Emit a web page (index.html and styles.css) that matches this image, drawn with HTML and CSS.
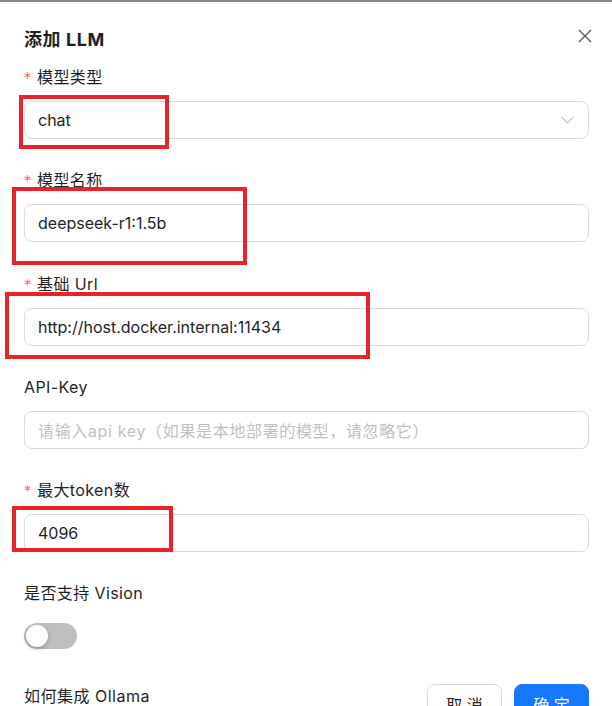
FILE: index.html
```html
<!DOCTYPE html>
<html lang="zh-CN">
<head>
<meta charset="utf-8">
<title>添加 LLM</title>
<link rel="stylesheet" href="styles.css">
</head>
<body>
<div class="topline"></div>
<div class="modal">
  <div class="header">
    <div class="title">添加 LLM</div>
    <button class="close" aria-label="close">
      <svg width="14" height="14" viewBox="0 0 14 14"><path d="M1 1L13 13M13 1L1 13" stroke="#5a5a5a" stroke-width="1.4" fill="none"/></svg>
    </button>
  </div>
  <form class="form">
    <div class="item">
      <div class="label"><span class="req">*</span>模型类型</div>
      <div class="input select"><span>chat</span>
        <svg class="arrow" width="13" height="8" viewBox="0 0 13 8"><path d="M0.5 0.8L6.5 7L12.5 0.8" stroke="#bfbfbf" stroke-width="1.1" fill="none"/></svg>
      </div>
    </div>
    <div class="item">
      <div class="label"><span class="req">*</span>模型名称</div>
      <div class="input">deepseek-r1:1.5b</div>
    </div>
    <div class="item">
      <div class="label"><span class="req">*</span>基础 Url</div>
      <div class="input">http://host.docker.internal:11434</div>
    </div>
    <div class="item">
      <div class="label">API-Key</div>
      <div class="input placeholder">请输入api key（如果是本地部署的模型，请忽略它）</div>
    </div>
    <div class="item">
      <div class="label"><span class="req">*</span>最大token数</div>
      <div class="input">4096</div>
    </div>
    <div class="item">
      <div class="label">是否支持 Vision</div>
      <div class="control"><span class="switch"><span class="knob"></span></span></div>
    </div>
  </form>
  <div class="footer">
    <div class="link">如何集成 Ollama</div>
    <div class="buttons">
      <button class="btn">取 消</button>
      <button class="btn primary">确 定</button>
    </div>
  </div>
</div>
<div class="mark m1"></div>
<div class="mark m2"></div>
<div class="mark m3"></div>
<div class="mark m5"></div>
</body>
</html>
```
FILE: styles.css
```css
html, body {
  margin: 0;
  padding: 0;
  background: #fff;
  overflow: hidden;
}
body {
  font-family: Inter, "Noto Sans CJK SC", sans-serif;
  color: rgba(0, 0, 0, 0.88);
  font-size: 16px;
  position: relative;
  height: 706px;
}
.topline {
  height: 2px;
  background: #8a8a8a;
}
.modal {
  padding: 0 23px 0 24px;
}
.header {
  display: flex;
  justify-content: space-between;
  align-items: flex-start;
  margin-top: 26px;
  margin-bottom: 13px;
}
.title {
  font-size: 18px;
  font-weight: 700;
  line-height: 24px;
  color: #1f1f1f;
  letter-spacing: 0.6px;
}
.close {
  border: 0;
  background: none;
  padding: 0;
  margin: 1px -3px 0 0;
  width: 14px;
  height: 14px;
  display: flex;
}
.form {
  display: flex;
  flex-direction: column;
}
.item {
  display: flex;
  flex-direction: column;
  margin-bottom: 29.3px;
}
.label {
  line-height: 24px;
  height: 24px;
  margin-bottom: 12px;
  color: #1f1f1f;
  letter-spacing: 0.4px;
}
.req {
  display: inline-block;
  width: 13px;
  color: #ff4d4f;
  font-size: 14px;
  font-family: "DejaVu Sans", sans-serif;
  vertical-align: top;
  line-height: 24px;
  letter-spacing: 0;
}
.input {
  height: 38px;
  box-sizing: border-box;
  border: 1px solid #d9d9d9;
  border-radius: 8px;
  padding: 0 13px;
  display: flex;
  align-items: center;
  color: #1f1f1f;
  white-space: nowrap;
}
.select {
  justify-content: space-between;
}
.arrow {
  margin-right: 1px;
}
.placeholder {
  color: #bfbfbf;
  letter-spacing: 0.65px;
}
.control {
  height: 38px;
  display: flex;
  align-items: center;
}
.switch {
  width: 53px;
  height: 26px;
  border-radius: 13px;
  background: #bfbfbf;
  position: relative;
  display: block;
}
.knob {
  position: absolute;
  left: 2px;
  top: 2px;
  width: 22px;
  height: 22px;
  border-radius: 50%;
  background: #fff;
  box-shadow: 0 2px 4px rgba(0, 35, 11, 0.25);
}
.footer {
  display: flex;
  justify-content: space-between;
  align-items: flex-start;
  margin-top: -1px;
}
.link {
  line-height: 24px;
  color: #1f1f1f;
  letter-spacing: 0.5px;
}
.buttons {
  display: flex;
  gap: 12px;
}
.btn {
  width: 75px;
  height: 40px;
  border-radius: 8px;
  border: 1px solid #d9d9d9;
  background: #fff;
  font-family: Inter, "Noto Sans CJK SC", sans-serif;
  font-size: 16px;
  color: #1f1f1f;
  padding: 0;
}
.btn.primary {
  background: #1677ff;
  border-color: #1677ff;
  color: #fff;
}
.mark {
  position: absolute;
  border: 4px solid #e8232b;
  box-sizing: border-box;
}
.m1 { left: 19px; top: 95px; width: 150px; height: 54px; }
.m2 { left: 12px; top: 187px; width: 235px; height: 78px; }
.m3 { left: 5px; top: 292px; width: 365px; height: 67px; }
.m5 { left: 12px; top: 506px; width: 161px; height: 46px; }
```
